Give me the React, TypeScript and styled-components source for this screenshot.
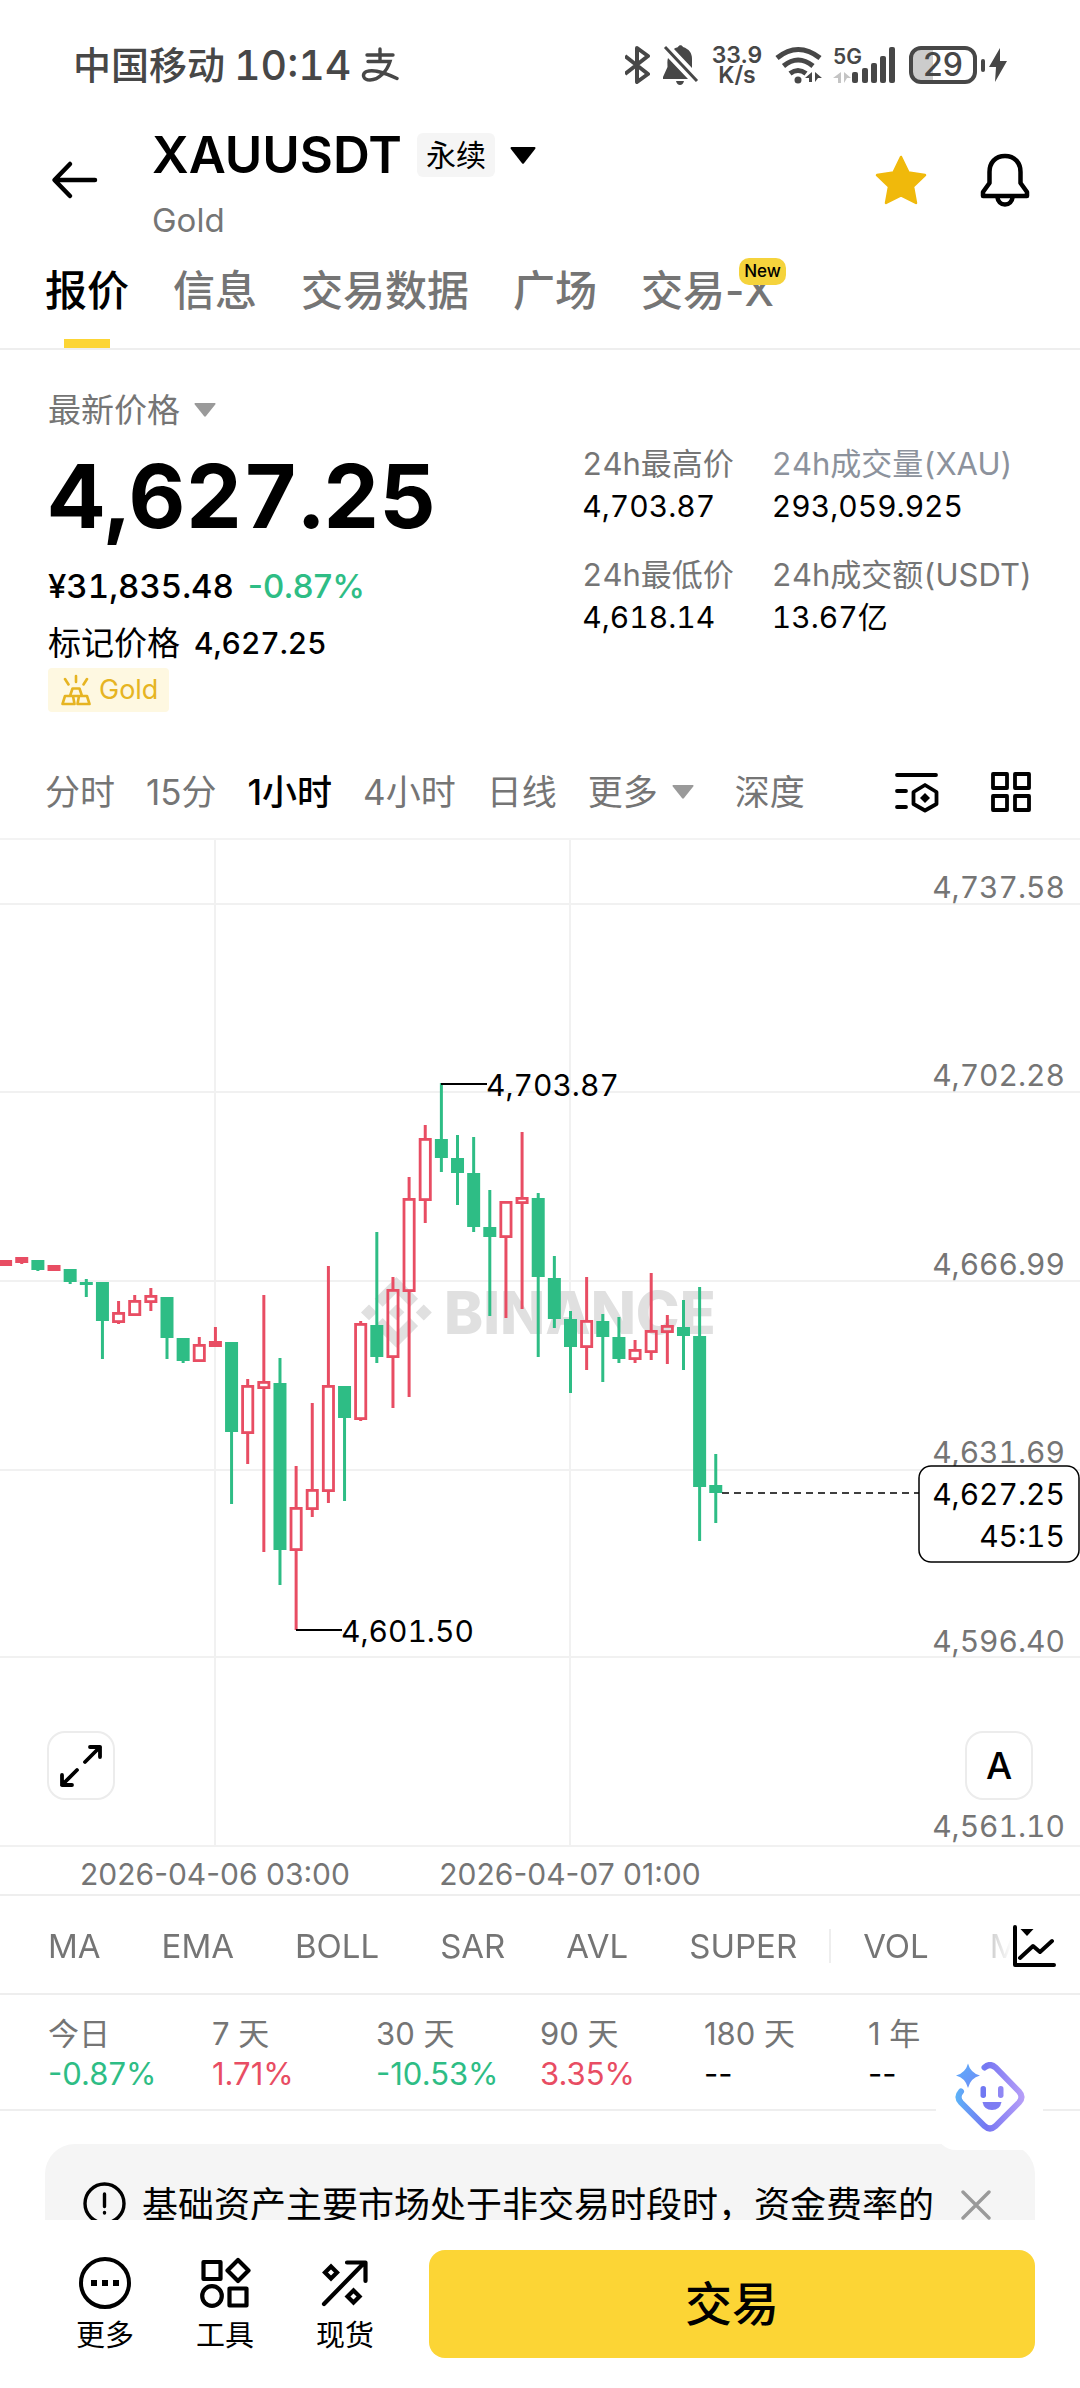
import React from "react";
import styled, { createGlobalStyle } from "styled-components";

const GREEN = "#2ebd85";
const RED = "#e84d63";
const YELLOW = "#fcd535";
const MUTED = "#757575";
const LINE = "#eeeeee";
const FONT = 'Inter, "Noto Sans CJK SC", sans-serif';

const GlobalStyle = createGlobalStyle`
  *, *::before, *::after { box-sizing: border-box; }
  body { margin: 0; background: #fff; color: #000; font-family: ${FONT}; }
  button { margin: 0; padding: 0; border: 0; background: none; color: inherit; font: inherit; cursor: pointer; white-space: nowrap; }
  svg { display: block; flex-shrink: 0; }
`;

const Screen = styled.div`
  display: flex;
  flex-direction: column;
  height: 100vh;
  overflow: hidden;
`;

const Content = styled.main`
  flex: 1;
  min-height: 0;
  overflow: hidden;
`;

/* ---------- status bar ---------- */

const StatusBar = styled.div`
  display: flex;
  align-items: center;
  justify-content: space-between;
  height: 120px;
  padding: 10px 73px 0 73px;
  color: #474747;
`;

const StatusGroup = styled.div<{ $gap: number }>`
  display: flex;
  align-items: center;
  gap: ${(p) => p.$gap}px;
`;

const Carrier = styled.span`
  font-size: 38px;
  line-height: 48px;
  font-weight: 500;
`;

const Clock = styled.span`
  font-size: 41px;
  line-height: 48px;
  font-weight: 500;
  font-variant-numeric: tabular-nums;
`;

const NetSpeed = styled.span`
  display: flex;
  flex-direction: column;
  align-items: center;
  width: 52px;
  font-size: 23px;
  line-height: 20px;
  font-weight: 600;
`;

const Battery = styled.span`
  display: flex;
  align-items: center;
  justify-content: center;
  width: 68px;
  height: 38px;
  border: 4px solid #474747;
  border-radius: 12px;
  background: linear-gradient(90deg, #cccccc 20px, #fff 20px);
  font-size: 32px;
  line-height: 30px;
  font-weight: 500;
`;

const BatteryNub = styled.span`
  width: 4px;
  height: 13px;
  border-radius: 2px;
  background: #474747;
`;

const SignalSvg = styled.svg`
  overflow: visible;
`;

/* ---------- header ---------- */

const Header = styled.header`
  display: flex;
  align-items: center;
  height: 120px;
  padding: 0 48px;
`;

const Pair = styled.div`
  flex: 1;
  display: flex;
  flex-direction: column;
  gap: 14px;
  padding: 6px 0 0 50px;
`;

const PairTop = styled.div`
  display: flex;
  align-items: center;
  gap: 15px;
`;

const Symbol = styled.h1`
  margin: 0;
  font-size: 51px;
  line-height: 60px;
  font-weight: 600;
`;

const Tag = styled.span`
  padding: 0 9px;
  border-radius: 6px;
  background: #f5f5f5;
  font-size: 30px;
  line-height: 44px;
`;

const PairName = styled.span`
  color: ${MUTED};
  font-size: 33px;
  line-height: 42px;
`;

const IconButton = styled.button`
  display: flex;
  align-items: center;
  justify-content: center;
`;

const HeaderActions = styled.div`
  display: flex;
  align-items: center;
  gap: 50px;
`;

/* ---------- section tabs ---------- */

const Tabs = styled.nav`
  display: flex;
  gap: 44px;
  height: 110px;
  padding: 0 45px;
  border-bottom: 2px solid ${LINE};
`;

const Tab = styled.button<{ $active?: boolean }>`
  position: relative;
  display: flex;
  align-items: flex-start;
  padding-top: 21px;
  color: ${(p) => (p.$active ? "#000" : MUTED)};
  font-size: 42px;
  line-height: 60px;
  font-weight: 500;
  &::after {
    content: "";
    display: ${(p) => (p.$active ? "block" : "none")};
    position: absolute;
    bottom: 0;
    left: 50%;
    width: 46px;
    margin-left: -23px;
    height: 9px;
    background: ${YELLOW};
  }
`;

const NewBadge = styled.span`
  position: absolute;
  top: 18px;
  right: -12px;
  padding: 0 5px;
  border-radius: 10px;
  background: #f5d33c;
  color: #000;
  font-size: 17px;
  line-height: 27px;
  font-weight: 500;
`;

/* ---------- price summary ---------- */

const Summary = styled.section`
  display: flex;
  justify-content: space-between;
  height: 394px;
  padding: 40px 48px 0;
  font-variant-numeric: tabular-nums;
`;

const Quote = styled.div`
  display: flex;
  flex-direction: column;
  align-items: flex-start;
`;

const PriceType = styled.button`
  display: flex;
  align-items: center;
  gap: 14px;
  color: ${MUTED};
  font-size: 33px;
  line-height: 40px;
`;

const LastPrice = styled.strong`
  margin: 22px 0 26px;
  font-size: 88px;
  line-height: 88px;
  font-weight: 700;
`;

const QuoteRow = styled.div`
  display: flex;
  align-items: center;
  gap: 14px;
  margin-bottom: 17px;
  font-size: 33px;
  line-height: 40px;
  font-weight: 500;
`;

const MarkRow = styled(QuoteRow)`
  margin-bottom: 5px;
  font-weight: 400;
`;

const MarkValue = styled.span`
  font-size: 30px;
  font-weight: 500;
`;

const Change = styled.span<{ $tone: "up" | "down" | "none" }>`
  color: ${(p) => (p.$tone === "up" ? RED : p.$tone === "down" ? GREEN : "#000")};
  font-variant-numeric: proportional-nums;
`;

const GoldTag = styled.span`
  display: flex;
  align-items: center;
  gap: 8px;
  padding: 0 11px 0 13px;
  border-radius: 4px;
  background: #fef8e1;
  color: #e6b422;
  font-size: 27px;
  line-height: 44px;
`;

const Stats = styled.dl`
  display: grid;
  grid-template-columns: auto auto;
  align-content: start;
  gap: 29px 38px;
  margin: 0;
  padding-top: 54px;
`;

const Stat = styled.div`
  display: flex;
  flex-direction: column;
  gap: 2px;
`;

const StatLabel = styled.dt<{ $cool?: boolean }>`
  color: ${(p) => (p.$cool ? "#8c929c" : MUTED)};
  font-size: 31px;
  line-height: 40px;
`;

const StatValue = styled.dd`
  margin: 0;
  font-size: 30px;
  line-height: 40px;
`;

/* ---------- time frames ---------- */

const Frames = styled.nav`
  display: flex;
  align-items: center;
  height: 96px;
  padding: 2px 48px 0 45px;
  border-bottom: 2px solid #f3f3f3;
`;

const FrameList = styled.div`
  flex: 1;
  display: flex;
  gap: 31px;
`;

const Frame = styled.button<{ $active?: boolean; $wide?: boolean }>`
  display: flex;
  align-items: center;
  gap: 14px;
  margin-right: ${(p) => (p.$wide ? 10 : 0)}px;
  color: ${(p) => (p.$active ? "#000" : MUTED)};
  font-size: 35px;
  line-height: 48px;
  font-weight: ${(p) => (p.$active ? 500 : 400)};
`;

const FrameTools = styled.div`
  display: flex;
  align-items: center;
  gap: 51px;
`;

/* ---------- chart ---------- */

const ChartArea = styled.section`
  position: relative;
`;

const ChartSvg = styled.svg`
  width: 100%;
  height: auto;
  font-family: ${FONT};
  font-size: 30px;
  font-variant-numeric: tabular-nums;
`;

const TimeLabels = styled.g`
  font-variant-numeric: proportional-nums;
`;

const ChartButton = styled.button<{ $side: "left" | "right" }>`
  position: absolute;
  ${(p) => p.$side}: 47px;
  bottom: 94px;
  display: flex;
  align-items: center;
  justify-content: center;
  width: 68px;
  height: 69px;
  border: 2px solid #ececec;
  border-radius: 18px;
  background: #fff;
  font-size: 37px;
  font-weight: 500;
`;

/* ---------- indicators ---------- */

const Indicators = styled.div`
  display: flex;
  align-items: center;
  height: 101px;
  padding: 2px 24px 0 48px;
  border: solid ${LINE};
  border-width: 2px 0;
  overflow: hidden;
`;

const IndicatorList = styled.div`
  flex: 1;
  min-width: 0;
  display: flex;
  align-items: center;
  gap: 61px;
  overflow: hidden;
  mask-image: linear-gradient(90deg, #000 calc(100% - 60px), transparent);
`;

const Indicator = styled.button`
  color: ${MUTED};
  font-size: 33px;
  line-height: 44px;
`;

const Divider = styled.span`
  flex-shrink: 0;
  width: 2px;
  height: 34px;
  margin: 0 -29px;
  background: ${LINE};
`;

/* ---------- performance ---------- */

const Performance = styled.dl`
  display: grid;
  grid-template-columns: repeat(6, 1fr);
  height: 116px;
  margin: 0;
  padding: 19px 48px 0;
  border-bottom: 2px solid ${LINE};
`;

const Period = styled.div`
  display: flex;
  flex-direction: column;
`;

const PeriodLabel = styled.dt`
  color: ${MUTED};
  font-size: 31px;
  line-height: 40px;
`;

const PeriodValue = styled.dd`
  margin: 0;
  font-size: 31px;
  line-height: 40px;
`;

const Assistant = styled.button`
  position: absolute;
  right: 37px;
  bottom: 238px;
  display: flex;
  align-items: center;
  justify-content: center;
  width: 107px;
  height: 107px;
  border-radius: 20px;
  background: #fff;
`;

/* ---------- notice ---------- */

const Notice = styled.aside`
  display: flex;
  align-items: flex-start;
  gap: 16px;
  margin: 33px 45px 0;
  padding: 36px 43px 36px 38px;
  border-radius: 30px;
  background: #f5f5f5;
`;

const NoticeText = styled.p`
  flex: 1;
  margin: 0;
  font-size: 36px;
  line-height: 50px;
`;

const NoticeIcon = styled.span`
  padding-top: 2px;
`;

const NoticeClose = styled(IconButton)`
  padding-top: 9px;
`;

/* ---------- bottom bar ---------- */

const BottomBar = styled.footer`
  display: flex;
  align-items: center;
  height: 168px;
  padding: 0 45px;
  background: #fff;
`;

const BottomItem = styled.button`
  display: flex;
  flex-direction: column;
  align-items: center;
  width: 120px;
  gap: 5px;
  padding-top: 6px;
  font-size: 29px;
  line-height: 44px;
`;

const TradeButton = styled.button`
  flex: 1;
  height: 108px;
  margin-left: 24px;
  padding-bottom: 8px;
  border-radius: 16px;
  background: ${YELLOW};
  font-size: 47px;
  font-weight: 500;
`;

/* ---------- icons ---------- */

const Caret = ({ w, h, color }: { w: number; h: number; color: string }) => (
  <svg width={w} height={h} viewBox="0 0 26 16" preserveAspectRatio="none" aria-hidden="true">
    <path d="M1.5 0h23q1.6 0.3 0.6 1.8L14 15.2q-1 1-2 0L0.9 1.8Q0 0.3 1.5 0z" fill={color} />
  </svg>
);

const AlipayGlyph = () => (
  <svg width="39" height="36" viewBox="0 0 39 36" fill="none" stroke="#474747" strokeWidth="3.4" strokeLinecap="round" aria-hidden="true">
    <path d="M7 8h26M20 2v11M8 14.500h22C27 24 19 33 10 33c-7 0-8.500-6-3.500-8.500C13 22 26 26 37 31.500" />
  </svg>
);

const BluetoothIcon = () => (
  <svg width="26" height="38" viewBox="0 0 26 38" fill="none" stroke="#474747" strokeWidth="4" strokeLinejoin="round" aria-hidden="true">
    <path d="M0 10l23 18-11 8V2l11 8L0 28" />
  </svg>
);

const MutedBellIcon = () => (
  <svg width="36" height="40" viewBox="0 0 36 40" aria-hidden="true">
    <path d="M5 13C4 16 4.500 19 4.500 22L0 32v2h25zM11 4c1-1 3-1.500 4-2 1-2.500 4-2.500 5 0 6 2 9 6 9 12v9z" fill="#474747" />
    <path d="M13 36h8q-1 4-4 4t-4-4z" fill="#474747" />
    <path d="M2 2l32 34" stroke="#474747" strokeWidth="3" />
  </svg>
);

const WifiIcon = () => (
  <svg width="48" height="38" viewBox="0 0 48 38" fill="none" stroke="#474747" strokeWidth="5" aria-hidden="true">
    <path d="M2 12Q23-5 45 12M8.500 20Q23 8 38 20M15 27.500q8-6 16 0" />
    <circle cx="23" cy="34" r="3.500" fill="#474747" stroke="none" />
    <path d="M37 26v10h-3v-4h-4zM40 36V26l7 6h-4z" fill="#474747" stroke="none" />
  </svg>
);

const SignalIcon = () => (
  <SignalSvg width="62" height="38" viewBox="2 0 62 38" aria-hidden="true">
    <text x="0" y="18" fontFamily={FONT} fontSize="21" fontWeight="600" fill="#474747">5G</text>
    <path d="M8 26v11H5v-5H0zM11 37V26l7 6h-4z" fill="#c4c4c4" />
    {[
      [19, 26],
      [29, 22],
      [38, 17],
      [47, 10],
      [56, 1],
    ].map(([x, y]) => (
      <rect key={x} x={x} y={y} width="6" height={37 - y} rx="2" fill="#474747" />
    ))}
  </SignalSvg>
);

const BoltIcon = () => (
  <svg width="18" height="34" viewBox="0 0 18 34" aria-hidden="true">
    <path d="M11 0L0 19h7L6 34 18 13h-7z" fill="#474747" />
  </svg>
);

const BackIcon = () => (
  <svg width="54" height="40" viewBox="0 0 54 40" fill="none" stroke="#000" strokeWidth="4.500" strokeLinecap="round" strokeLinejoin="round" aria-hidden="true">
    <path d="M47 20H8M22 4L6.500 20 22 36" />
  </svg>
);

const StarIcon = () => (
  <svg width="54" height="50" viewBox="0 0 54 50" aria-hidden="true">
    <path d="M27 2l7.500 15.500L51 20 39 31.500 42 48 27 40.500 12 48l3-16.500L3 20l16.500-2.500z" fill="#f0b90b" stroke="#f0b90b" strokeWidth="2.500" strokeLinejoin="round" />
  </svg>
);

const BellIcon = () => (
  <svg width="54" height="56" viewBox="0 0 54 56" fill="none" stroke="#000" strokeWidth="4.500" strokeLinejoin="round" aria-hidden="true">
    <path d="M27 4C17 4 11.500 11 11.500 20v11L5 40v4h44v-4l-6.500-9V20C42.500 11 37 4 27 4zM19 44c1 6 4 8.500 8 8.500s7-2.500 8-8.500" />
  </svg>
);

const GoldIcon = () => (
  <svg width="30" height="32" viewBox="0 0 30 32" fill="none" stroke="#e6b422" strokeWidth="2.600" strokeLinecap="round" strokeLinejoin="round" aria-hidden="true">
    <path d="M15 2v6M4 5l3.500 5.500M26 5l-3.500 5.500M11.500 14.500h7l2.500 7.500h-12zM4 22h8l1.500 8H1.500zM18 22h8l2.500 8H16.500z" />
  </svg>
);

const ChartSettingsIcon = () => (
  <svg width="44" height="42" viewBox="0 0 44 42" fill="none" stroke="#000" strokeWidth="3.800" strokeLinecap="round" strokeLinejoin="round" aria-hidden="true">
    <path d="M2 4h39M2 20h9M2 36h9M30 14l11.500 7v12L30 39.500 18.500 33V21z" />
    <path d="M30 22l5 5-5 5-5-5z" fill="#000" stroke="none" />
  </svg>
);

const GridIcon = () => (
  <svg width="42" height="42" viewBox="0 0 42 42" fill="none" stroke="#000" strokeWidth="3.800" strokeLinejoin="round" aria-hidden="true">
    <path d="M3 3h14v14H3zM25 3h14v14H25zM3 25h14v14H3zM25 25h14v14H25z" />
  </svg>
);

const ExpandIcon = () => (
  <svg width="44" height="44" viewBox="0 0 44 44" fill="none" stroke="#000" strokeWidth="3.800" strokeLinecap="round" strokeLinejoin="round" aria-hidden="true">
    <path d="M26 18L41 3M31 3h10v10M18 26L3 41M3 31v10h10" />
  </svg>
);

const IndicatorIcon = () => (
  <svg width="44" height="44" viewBox="0 0 44 44" fill="none" stroke="#000" strokeWidth="4" strokeLinecap="round" strokeLinejoin="round" aria-hidden="true">
    <path d="M3 3v38h39M8 34l13-12 7 6 12-11" />
    <path d="M8.500 5h13L15 12z" fill="#000" stroke="none" />
  </svg>
);

const AssistantIcon = () => (
  <svg width="70" height="70" viewBox="0 0 70 70" fill="none" aria-hidden="true">
    <defs>
      <linearGradient id="bot" x1="0" y1="35" x2="70" y2="35" gradientUnits="userSpaceOnUse">
        <stop offset="0" stopColor="#5bb4f8" />
        <stop offset="0.450" stopColor="#7676f2" />
        <stop offset="1" stopColor="#b9a0f8" />
      </linearGradient>
      <linearGradient id="spark" x1="0" y1="0" x2="24" y2="24" gradientUnits="userSpaceOnUse">
        <stop offset="0" stopColor="#5ab0fb" />
        <stop offset="1" stopColor="#6f8df6" />
      </linearGradient>
    </defs>
    <path d="M29.500 5.500q5.500-5 11 0L64 29.500q5 5.500 0 11L40.500 64q-5.500 5-11 0L6 40.500q-5-5.500 0-11" stroke="url(#bot)" strokeWidth="6" strokeLinecap="round" />
    <path d="M13 1.500q2.500 9.500 12 12-9.500 2.500-12 12.500-2.500-10-12-12.500 9.500-2.500 12-12z" fill="url(#spark)" />
    <rect x="25.500" y="24" width="5.500" height="12" rx="2.700" fill="#7078f2" />
    <rect x="43" y="24" width="5.500" height="12" rx="2.700" fill="#8f87f4" />
    <path d="M27.500 40h19q-1.500 8-9.500 8t-9.500-8z" fill="#7d7cf3" />
  </svg>
);

const InfoIcon = () => (
  <svg width="43" height="43" viewBox="0 0 43 43" fill="none" stroke="#000" strokeWidth="3.400" strokeLinecap="round" aria-hidden="true">
    <circle cx="21.500" cy="21.500" r="19.500" />
    <path d="M21.500 12v12.500M21.500 30.500v0.500" />
  </svg>
);

const CloseIcon = () => (
  <svg width="32" height="32" viewBox="0 0 32 32" stroke="#9a9a9a" strokeWidth="3.400" strokeLinecap="round" aria-hidden="true">
    <path d="M3 3l26 26M29 3L3 29" />
  </svg>
);

const MoreIcon = () => (
  <svg width="52" height="52" viewBox="0 0 52 52" aria-hidden="true">
    <circle cx="26" cy="26" r="24" fill="none" stroke="#000" strokeWidth="4" />
    <path d="M12 23h6v6h-6zM23 23h6v6h-6zM34 23h6v6h-6z" />
  </svg>
);

const ToolsIcon = () => (
  <svg width="52" height="52" viewBox="0 0 52 52" fill="none" stroke="#000" strokeWidth="4.200" strokeLinejoin="round" aria-hidden="true">
    <path d="M4.500 5h17v17h-17zM39 3l10.500 10.500L39 24 28.500 13.500zM30.500 31.500h17v17h-17z" />
    <circle cx="13" cy="39" r="9.800" />
  </svg>
);

const SpotIcon = () => (
  <svg width="52" height="52" viewBox="0 0 52 52" fill="none" stroke="#000" strokeWidth="4.200" strokeLinecap="round" strokeLinejoin="round" aria-hidden="true">
    <path d="M5 47L45 6M28 5.500h18.500V24" />
    <path d="M12 9.500l6 6-6 6-6-6zM34.500 33.500l6 6-6 6-6-6z" strokeLinejoin="miter" />
  </svg>
);

/* ---------- chart data and drawing ---------- */

// Each candle: colour, high, body top, body bottom, low (chart units, downwards).
type Candle = ["r" | "g", number, number, number, number];

const CANDLES: Candle[] = [
  ["r", 420, 420, 426, 426],
  ["r", 417, 417, 423, 424],
  ["g", 420, 420, 430, 431],
  ["r", 425, 425, 431, 431],
  ["g", 429, 429, 442, 444],
  ["g", 439, 442, 445, 457],
  ["g", 442, 442, 481, 519],
  ["r", 461, 472, 483, 484],
  ["r", 455, 460, 476, 476],
  ["r", 448, 455, 463, 471],
  ["g", 457, 457, 498, 519],
  ["g", 498, 498, 521, 523],
  ["r", 497, 504, 522, 522],
  ["r", 487, 501, 507, 507],
  ["g", 502, 502, 592, 664],
  ["r", 539, 545, 594, 624],
  ["r", 455, 541, 549, 712],
  ["g", 518, 543, 710, 745],
  ["r", 626, 667, 711, 790],
  ["r", 563, 649, 670, 677],
  ["r", 426, 545, 652, 663],
  ["g", 546, 546, 578, 661],
  ["r", 481, 483, 580, 581],
  ["g", 392, 485, 517, 523],
  ["r", 437, 449, 518, 568],
  ["r", 337, 358, 452, 557],
  ["r", 285, 298, 361, 383],
  ["g", 243, 299, 318, 332],
  ["g", 295, 318, 333, 365],
  ["g", 297, 333, 387, 392],
  ["g", 350, 387, 397, 476],
  ["r", 361, 361, 398, 478],
  ["r", 292, 357, 364, 469],
  ["g", 353, 358, 437, 517],
  ["g", 416, 438, 479, 488],
  ["g", 471, 479, 507, 553],
  ["r", 437, 480, 508, 530],
  ["g", 474, 481, 497, 542],
  ["g", 477, 497, 519, 523],
  ["r", 500, 509, 520, 523],
  ["r", 433, 490, 513, 520],
  ["r", 475, 485, 493, 524],
  ["g", 460, 487, 496, 530],
  ["g", 447, 496, 647, 701],
  ["g", 614, 645, 653, 683],
];

const LEVELS: [string, number, number][] = [
  ["4,737.58", 64, 58],
  ["4,702.28", 252, 246],
  ["4,666.99", 441, 435],
  ["4,631.69", 630, 623],
  ["4,596.40", 817, 812],
  ["4,561.10", 1006, 997],
];

const TIMES: [string, number][] = [
  ["2026-04-06 03:00", 215],
  ["2026-04-07 01:00", 570],
];

const CANDLE_STEP = 16.14;

const CandleShape = ({ candle, index }: { candle: Candle; index: number }) => {
  const [tone, high, top, bottom, low] = candle;
  const x = 5.6 + index * CANDLE_STEP;
  const color = tone === "g" ? GREEN : RED;
  const solid = tone === "g" || bottom - top <= 6;
  return (
    <g stroke={color} strokeWidth="3">
      {high < top && <path d={`M${x} ${high}V${top}`} />}
      {low > bottom && <path d={`M${x} ${bottom}V${low}`} />}
      {solid ? (
        <rect x={x - 6.5} y={top} width="13" height={bottom - top} fill={color} stroke="none" />
      ) : (
        <rect x={x - 5.1} y={top + 1.4} width="10.200" height={bottom - top - 2.8} fill="none" strokeWidth="2.800" />
      )}
    </g>
  );
};

const PriceChart = () => (
  <ChartSvg viewBox="0 0 1080 1054" role="img" aria-label="XAUUSDT 1小时">
    <g stroke="#f1f1f1" strokeWidth="2">
      {LEVELS.map(([label, y]) => (
        <path key={label} d={`M0 ${y}H1080`} />
      ))}
      {TIMES.map(([label, x]) => (
        <path key={label} d={`M${x} 0V1006`} />
      ))}
    </g>
    <g fill="#e0e0e0">
      <path
        transform="translate(361 437) scale(2.950)"
        d="M16.624 13.920l2.717 2.715-7.353 7.353-7.353-7.352 2.717-2.716 4.636 4.659 4.636-4.659zm4.637-4.637L24 12l-2.715 2.716L18.568 12l2.693-2.717zm-9.272.001l2.716 2.691-2.716 2.717L9.272 12l2.716-2.715zm-9.272-.001L5.409 12l-2.691 2.692L0 12l2.716-2.717zM11.989.011l7.353 7.329-2.718 2.716-4.635-4.636-4.636 4.660-2.717-2.716 7.353-7.353z"
      />
      <text x="444" y="494" fontSize="59" fontWeight="800">BINANCE</text>
    </g>
    {CANDLES.map((candle, i) => (
      <CandleShape key={i} candle={candle} index={i} />
    ))}
    <g fill={MUTED} textAnchor="end">
      {LEVELS.map(([label, , y]) => (
        <text key={label} x="1065" y={y}>{label}</text>
      ))}
    </g>
    <TimeLabels fill={MUTED} textAnchor="middle">
      {TIMES.map(([label, x]) => (
        <text key={label} x={x} y="1045">{label}</text>
      ))}
    </TimeLabels>
    <g stroke="#000" strokeWidth="2">
      <path d="M441 244H487M296 790H342" />
      <path d="M722 653H919" strokeDasharray="7 5" strokeWidth="1.500" />
    </g>
    <text x="486" y="256">4,703.87</text>
    <text x="341" y="802">4,601.50</text>
    <rect x="919" y="626" width="160" height="96" rx="12" fill="#fff" stroke="#000" strokeWidth="1.500" />
    <g textAnchor="end">
      <text x="1065" y="665">4,627.25</text>
      <text x="1065" y="707">45:15</text>
    </g>
  </ChartSvg>
);

const INDICATORS = ["MA", "EMA", "BOLL", "SAR", "AVL", "SUPER"];

const PERIODS: [string, string, "up" | "down" | "none"][] = [
  ["今日", "-0.87%", "down"],
  ["7 天", "1.71%", "up"],
  ["30 天", "-10.53%", "down"],
  ["90 天", "3.35%", "up"],
  ["180 天", "--", "none"],
  ["1 年", "--", "none"],
];

const STATS: [string, string, boolean][] = [
  ["24h最高价", "4,703.87", false],
  ["24h成交量(XAU)", "293,059.925", true],
  ["24h最低价", "4,618.14", false],
  ["24h成交额(USDT)", "13.67亿", false],
];

export default function App() {
  return (
    <Screen>
      <GlobalStyle />
      <Content>
        <StatusBar>
          <StatusGroup $gap={9}>
            <Carrier>中国移动</Carrier>
            <Clock>10:14</Clock>
            <AlipayGlyph />
          </StatusGroup>
          <StatusGroup $gap={12}>
            <BluetoothIcon />
            <MutedBellIcon />
            <NetSpeed>
              <span>33.9</span>
              <span>K/s</span>
            </NetSpeed>
            <WifiIcon />
            <SignalIcon />
            <StatusGroup $gap={4}>
              <Battery>29</Battery>
              <BatteryNub />
              <BoltIcon />
            </StatusGroup>
          </StatusGroup>
        </StatusBar>

        <Header>
          <IconButton aria-label="返回">
            <BackIcon />
          </IconButton>
          <Pair>
            <PairTop>
              <Symbol>XAUUSDT</Symbol>
              <Tag>永续</Tag>
              <Caret w={26} h={17} color="#000" />
            </PairTop>
            <PairName>Gold</PairName>
          </Pair>
          <HeaderActions>
            <IconButton aria-label="收藏">
              <StarIcon />
            </IconButton>
            <IconButton aria-label="提醒">
              <BellIcon />
            </IconButton>
          </HeaderActions>
        </Header>

        <Tabs>
          <Tab $active>报价</Tab>
          <Tab>信息</Tab>
          <Tab>交易数据</Tab>
          <Tab>广场</Tab>
          <Tab>
            交易-X
            <NewBadge>New</NewBadge>
          </Tab>
        </Tabs>

        <Summary>
          <Quote>
            <PriceType>
              最新价格
              <Caret w={22} h={14} color="#9a9a9a" />
            </PriceType>
            <LastPrice>4,627.25</LastPrice>
            <QuoteRow>
              <span>¥31,835.48</span>
              <Change $tone="down">-0.87%</Change>
            </QuoteRow>
            <MarkRow>
              <span>标记价格</span>
              <MarkValue>4,627.25</MarkValue>
            </MarkRow>
            <GoldTag>
              <GoldIcon />
              Gold
            </GoldTag>
          </Quote>
          <Stats>
            {STATS.map(([label, value, cool]) => (
              <Stat key={label}>
                <StatLabel $cool={cool}>{label}</StatLabel>
                <StatValue>{value}</StatValue>
              </Stat>
            ))}
          </Stats>
        </Summary>

        <Frames>
          <FrameList>
            <Frame>分时</Frame>
            <Frame>15分</Frame>
            <Frame $active>1小时</Frame>
            <Frame>4小时</Frame>
            <Frame>日线</Frame>
            <Frame $wide>
              更多
              <Caret w={22} h={14} color="#9a9a9a" />
            </Frame>
            <Frame>深度</Frame>
          </FrameList>
          <FrameTools>
            <IconButton aria-label="图表设置">
              <ChartSettingsIcon />
            </IconButton>
            <IconButton aria-label="布局">
              <GridIcon />
            </IconButton>
          </FrameTools>
        </Frames>

        <ChartArea>
          <PriceChart />
          <ChartButton $side="left" aria-label="全屏">
            <ExpandIcon />
          </ChartButton>
          <ChartButton $side="right">A</ChartButton>
        </ChartArea>

        <Indicators>
          <IndicatorList>
            {INDICATORS.map((name) => (
              <Indicator key={name}>{name}</Indicator>
            ))}
            <Divider />
            <Indicator>VOL</Indicator>
            <Indicator>MACD</Indicator>
          </IndicatorList>
          <IconButton aria-label="指标">
            <IndicatorIcon />
          </IconButton>
        </Indicators>

        <Performance>
          {PERIODS.map(([label, value, tone]) => (
            <Period key={label}>
              <PeriodLabel>{label}</PeriodLabel>
              <PeriodValue>
                <Change $tone={tone}>{value}</Change>
              </PeriodValue>
            </Period>
          ))}
        </Performance>

        <Notice>
          <NoticeIcon>
            <InfoIcon />
          </NoticeIcon>
          <NoticeText>基础资产主要市场处于非交易时段时，资金费率的</NoticeText>
          <NoticeClose aria-label="关闭">
            <CloseIcon />
          </NoticeClose>
        </Notice>
      </Content>

      <Assistant aria-label="助手">
        <AssistantIcon />
      </Assistant>

      <BottomBar>
        <BottomItem>
          <MoreIcon />
          更多
        </BottomItem>
        <BottomItem>
          <ToolsIcon />
          工具
        </BottomItem>
        <BottomItem>
          <SpotIcon />
          现货
        </BottomItem>
        <TradeButton>交易</TradeButton>
      </BottomBar>
    </Screen>
  );
}
